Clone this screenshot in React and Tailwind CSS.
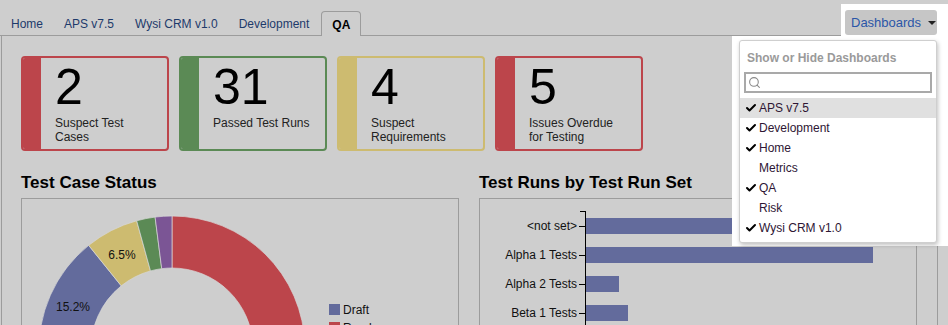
import { Check, Search } from 'lucide-react';

const TABS = ['Home', 'APS v7.5', 'Wysi CRM v1.0', 'Development'];

const CARDS = [
  { value: '2', label: ['Suspect Test', 'Cases'], border: 'border-[#bc454b]', bar: 'bg-[#bc454b]' },
  { value: '31', label: ['Passed Test Runs'], border: 'border-[#5b8a55]', bar: 'bg-[#5b8a55]' },
  { value: '4', label: ['Suspect', 'Requirements'], border: 'border-[#cdbb70]', bar: 'bg-[#cdbb70]' },
  { value: '5', label: ['Issues Overdue', 'for Testing'], border: 'border-[#bc454b]', bar: 'bg-[#bc454b]' },
];

const MENU = [
  { name: 'APS v7.5', on: true },
  { name: 'Development', on: true },
  { name: 'Home', on: true },
  { name: 'Metrics', on: false },
  { name: 'QA', on: true },
  { name: 'Risk', on: false },
  { name: 'Wysi CRM v1.0', on: true },
];

const SEGMENTS = [
  { from: 0, to: 266.5, color: '#bc454b' },
  { from: 266.5, to: 321.2, color: '#636b9c' },
  { from: 321.2, to: 344.6, color: '#cdbb70' },
  { from: 344.6, to: 352.7, color: '#5b8a55' },
  { from: 352.7, to: 360, color: '#7b5595' },
];

const BARS = [
  { label: '<not set>', y: 27, w: 330 },
  { label: 'Alpha 1 Tests', y: 56, w: 287 },
  { label: 'Alpha 2 Tests', y: 85, w: 33 },
  { label: 'Beta 1 Tests', y: 114, w: 42 },
];

function pt(cx, cy, r, deg) {
  const a = ((deg - 90) * Math.PI) / 180;
  return [cx + r * Math.cos(a), cy + r * Math.sin(a)];
}

function arc(cx, cy, R, r, from, to) {
  const large = to - from > 180 ? 1 : 0;
  const [x1, y1] = pt(cx, cy, R, from);
  const [x2, y2] = pt(cx, cy, R, to);
  const [x3, y3] = pt(cx, cy, r, to);
  const [x4, y4] = pt(cx, cy, r, from);
  return `M${x1} ${y1} A${R} ${R} 0 ${large} 1 ${x2} ${y2} L${x3} ${y3} A${r} ${r} 0 ${large} 0 ${x4} ${y4} Z`;
}

function StatCard({ card }) {
  return (
    <div className={`flex w-[148px] h-[95px] rounded-[4px] border-2 overflow-hidden ${card.border}`}>
      <div className={`w-[18px] shrink-0 ${card.bar}`} />
      <div className="pl-[14px] pt-[3px]">
        <div className="text-[50px] leading-[52px] text-black">{card.value}</div>
        <div className="mt-[3px] text-[12px] leading-[14px] text-[#222]">
          {card.label.map((l) => (
            <div key={l}>{l}</div>
          ))}
        </div>
      </div>
    </div>
  );
}

function Donut() {
  return (
    <svg width="436" height="130" className="block">
      {SEGMENTS.map((s) => (
        <path key={s.color} d={arc(150, 150, 133, 81, s.from, s.to)} fill={s.color} stroke="#d8d8d8" strokeWidth="0.7" />
      ))}
      <text x="100" y="60" fontSize="12" fill="#111" textAnchor="middle">6.5%</text>
      <text x="51" y="112" fontSize="12" fill="#111" textAnchor="middle">15.2%</text>
      <rect x="307" y="105" width="11" height="11" fill="#636b9c" />
      <text x="321" y="115" fontSize="12" fill="#111">Draft</text>
      <rect x="307" y="123" width="11" height="11" fill="#bc454b" />
      <text x="321" y="133" fontSize="12" fill="#111">Ready</text>
    </svg>
  );
}

function BarChart() {
  return (
    <svg width="436" height="130" className="block">
      <line x1="105.5" y1="12" x2="105.5" y2="130" stroke="#000" />
      <line x1="100" y1="12.5" x2="106" y2="12.5" stroke="#000" />
      {BARS.map((b) => (
        <g key={b.label}>
          <line x1="99" y1={b.y + 0.5} x2="106" y2={b.y + 0.5} stroke="#000" />
          <text x="97" y={b.y + 4} fontSize="12" fill="#111" textAnchor="end">{b.label}</text>
          <rect x="106" y={b.y - 8} width={b.w} height="16" fill="#636b9c" />
        </g>
      ))}
    </svg>
  );
}

export default function App() {
  return (
    <div className="relative w-[948px] h-[325px] overflow-hidden bg-[#cecece] font-['Liberation_Sans',Arial,sans-serif]">
      {/* tab strip */}
      <div className="flex items-end h-[36px] pl-[1px] border-b border-[#9c9c9c]">
        {TABS.map((t) => (
          <div key={t} className="px-[10px] pb-[3px] text-[12px] leading-[16px] text-[#1d3a6b] mr-[1px]">
            {t}
          </div>
        ))}
        <div className="relative top-[1px] ml-[1px] h-[25px] px-[10px] pt-[5px] rounded-t-[4px] border border-b-0 border-[#9c9c9c] bg-[#cecece] text-[12px] leading-[16px] font-bold text-black">
          QA
        </div>
      </div>

      {/* content panel */}
      <div className="ml-[1px] mr-[10px] h-[289px] border-l border-r border-[#9c9c9c] pl-[19px] pt-[20px]">
        <div className="flex gap-[10px]">
          {CARDS.map((c) => (
            <StatCard key={c.label.join()} card={c} />
          ))}
        </div>

        <div className="flex gap-[20px] mt-[22px]">
          <div className="w-[438px]">
            <h2 className="text-[17px] leading-[20px] font-bold text-black mb-[5px]">Test Case Status</h2>
            <div className="h-[200px] border border-[#9c9c9c]">
              <Donut />
            </div>
          </div>
          <div className="w-[438px]">
            <h2 className="text-[17px] leading-[20px] font-bold text-black mb-[5px]">Test Runs by Test Run Set</h2>
            <div className="h-[200px] border border-[#9c9c9c]">
              <BarChart />
            </div>
          </div>
        </div>
      </div>

      {/* highlighted dashboards menu */}
      <div className="absolute left-[841px] top-[4px] w-[107px] h-[34px] bg-white" />
      <div className="absolute left-[732px] top-[36px] w-[216px] h-[210px] bg-white" />
      <button className="absolute left-[845px] top-[10px] w-[92px] h-[25px] rounded-[3px] bg-[#c6c6c6] flex items-center pl-[6px] text-[13px] text-[#2b56a8]">
        Dashboards
        <span className="ml-[7px] w-0 h-0 border-l-[4px] border-r-[4px] border-t-[4px] border-l-transparent border-r-transparent border-t-[#222]" />
      </button>
      <div className="absolute left-[739px] top-[40px] w-[198px] h-[203px] rounded-[3px] border border-[#cfcfcf] bg-white shadow-[1px_2px_4px_rgba(0,0,0,0.25)]">
        <div className="px-[7px] pt-[10px] text-[12px] leading-[14px] font-bold text-[#9a9a9a]">Show or Hide Dashboards</div>
        <div className="mx-[4px] mt-[7px] h-[21px] border-2 border-[#a9a9a9] flex items-center pl-[2px]">
          <Search size={13} strokeWidth={2} className="text-[#8a8a8a]" />
        </div>
        <div className="mt-[5px]">
          {MENU.map((m, i) => (
            <div
              key={m.name}
              className={`flex items-center h-[20px] pl-[5px] text-[12px] text-[#2e1634] ${i === 0 ? 'bg-[#e0e0e0]' : ''}`}
            >
              <span className="w-[14px] flex">
                {m.on && <Check size={12} strokeWidth={4} className="text-black" />}
              </span>
              {m.name}
            </div>
          ))}
        </div>
      </div>
    </div>
  );
}
